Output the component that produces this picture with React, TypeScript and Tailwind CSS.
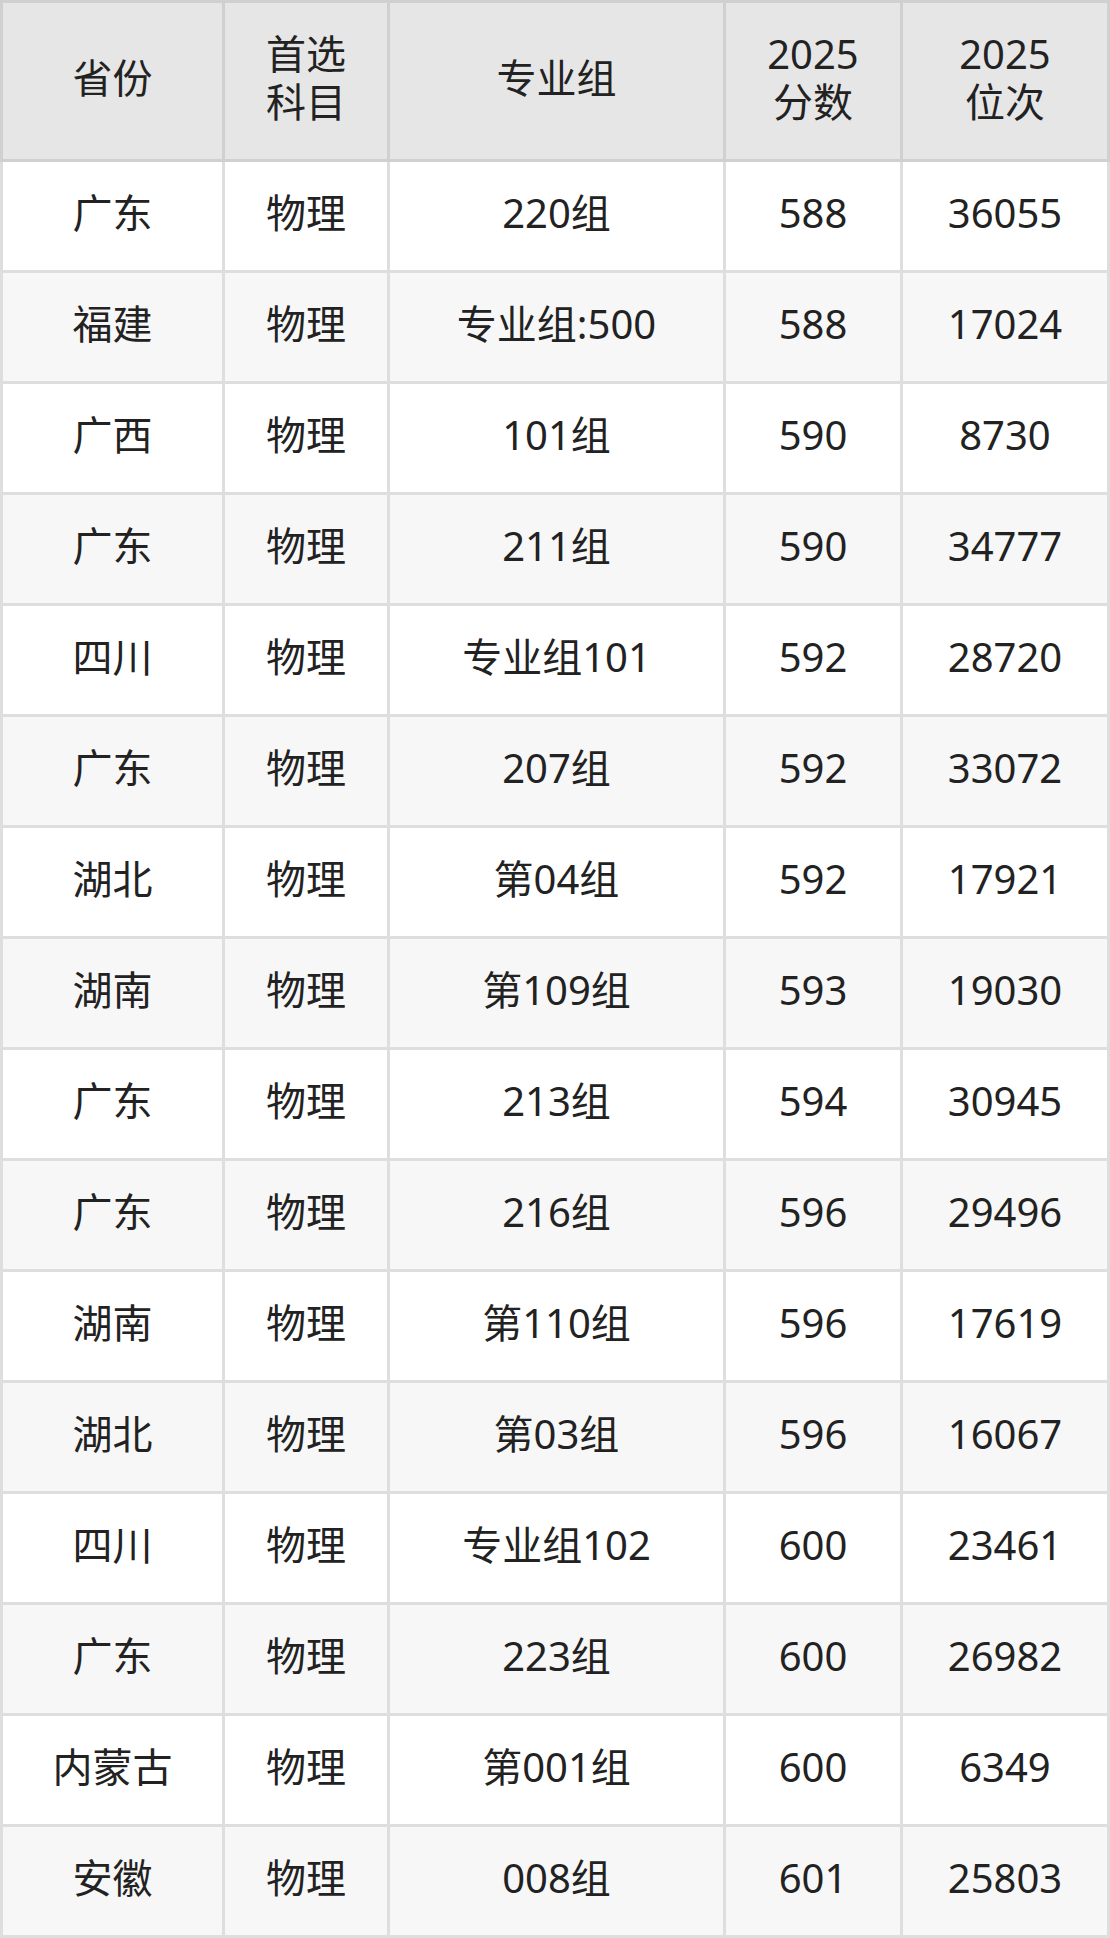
import React from "react";

const rows: string[][] = [
  ["广东", "物理", "220组", "588", "36055"],
  ["福建", "物理", "专业组:500", "588", "17024"],
  ["广西", "物理", "101组", "590", "8730"],
  ["广东", "物理", "211组", "590", "34777"],
  ["四川", "物理", "专业组101", "592", "28720"],
  ["广东", "物理", "207组", "592", "33072"],
  ["湖北", "物理", "第04组", "592", "17921"],
  ["湖南", "物理", "第109组", "593", "19030"],
  ["广东", "物理", "213组", "594", "30945"],
  ["广东", "物理", "216组", "596", "29496"],
  ["湖南", "物理", "第110组", "596", "17619"],
  ["湖北", "物理", "第03组", "596", "16067"],
  ["四川", "物理", "专业组102", "600", "23461"],
  ["广东", "物理", "223组", "600", "26982"],
  ["内蒙古", "物理", "第001组", "600", "6349"],
  ["安徽", "物理", "008组", "601", "25803"],
];

const headers: string[][] = [["省份"], ["首选", "科目"], ["专业组"], ["2025", "分数"], ["2025", "位次"]];

const cols = "grid grid-cols-[219px_162px_333px_174px_204px] gap-x-[3px]";

export default function App() {
  return (
    <div
      className="w-[1110px] text-[#222] text-[40px] leading-[48px]"
      style={{ fontFamily: '"Noto Sans", "Noto Sans CJK SC", sans-serif' }}
    >
      <div className={`${cols} bg-[#d0d0d0] p-[3px]`}>
        {headers.map((h, i) => (
          <div key={i} className="h-[156px] bg-[#e6e6e6] flex flex-col items-center justify-center text-center pb-[6px]">
            {h.map((l, j) => (
              <div key={j} className="leading-[48px]">{l}</div>
            ))}
          </div>
        ))}
      </div>
      <div className="bg-[#dedede] px-[3px] pb-[3px] flex flex-col gap-y-[3px] pt-0">
        {rows.map((r, i) => (
          <div key={i} className={cols}>
            {r.map((c, j) => (
              <div
                key={j}
                className={`h-[108px] flex items-center justify-center text-center pb-[7px] ${i % 2 === 1 ? "bg-[#f7f7f7]" : "bg-white"}`}
              >
                {c}
              </div>
            ))}
          </div>
        ))}
      </div>
    </div>
  );
}
